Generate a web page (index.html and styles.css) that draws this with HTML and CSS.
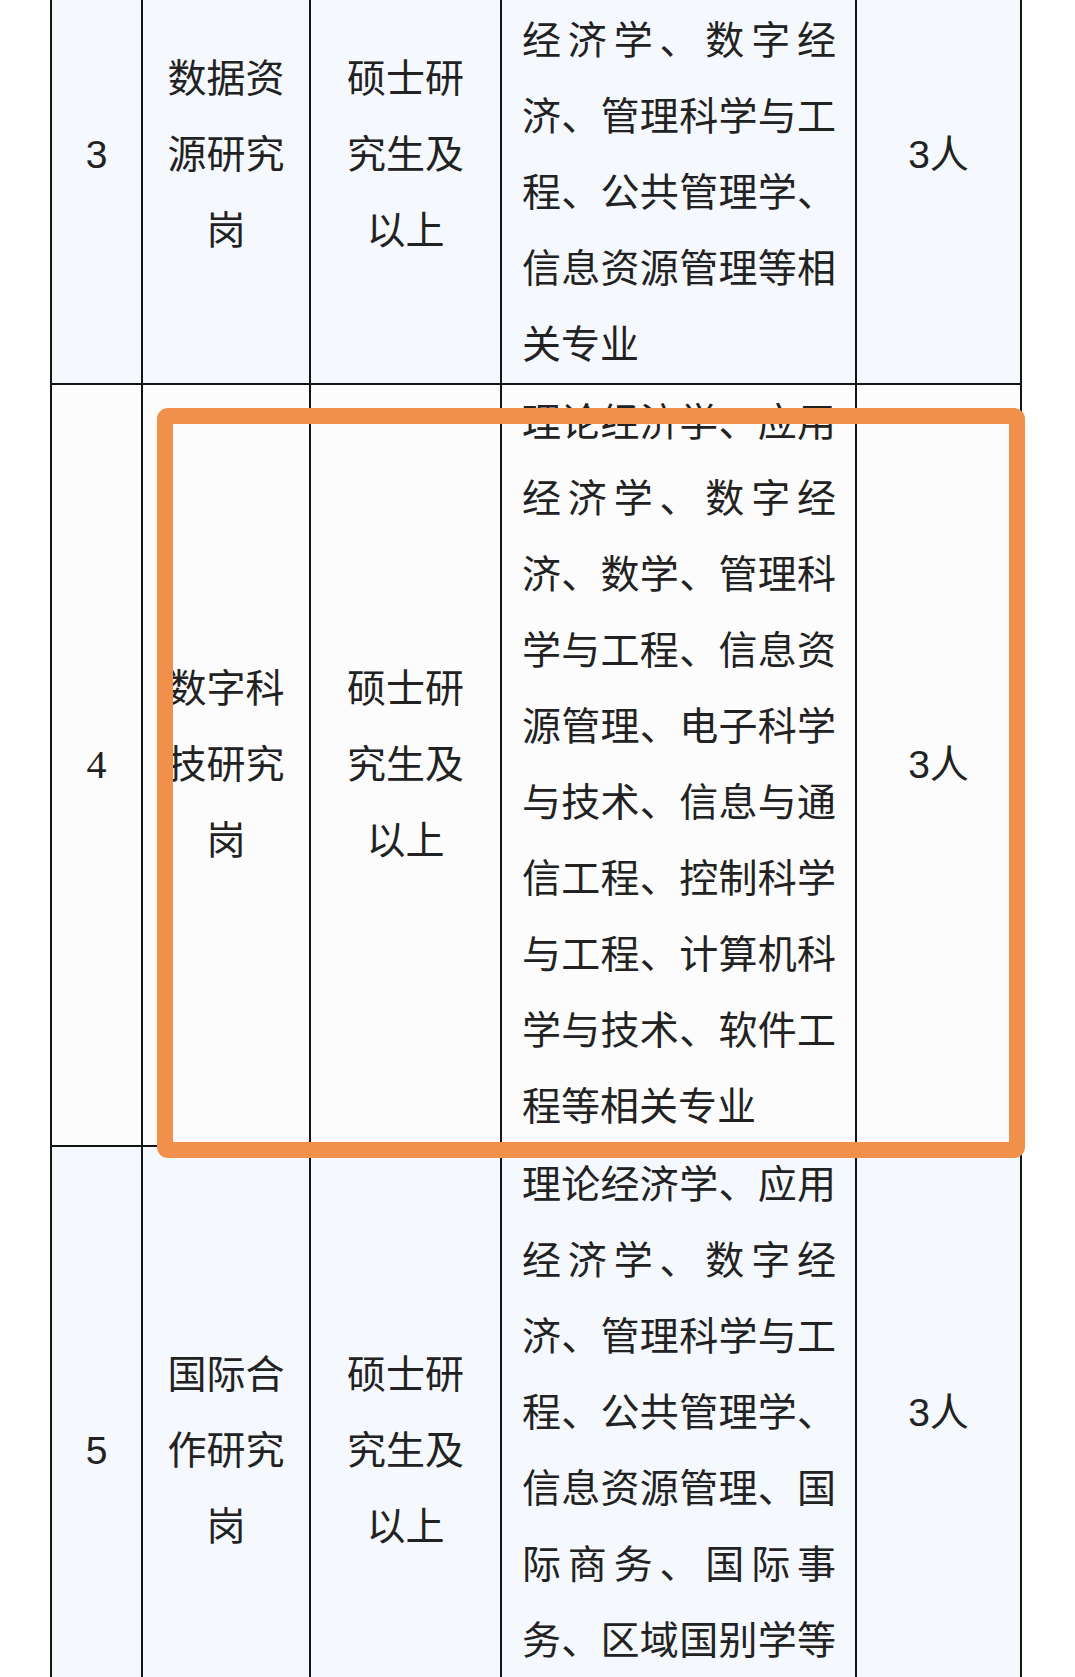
FILE: index.html
```html
<!DOCTYPE html>
<html lang="zh-CN">
<head>
<meta charset="utf-8">
<title>岗位表</title>
<link rel="stylesheet" href="styles.css">
</head>
<body>
<div class="page">
  <table class="jobs">
    <colgroup>
      <col class="c-no">
      <col class="c-post">
      <col class="c-edu">
      <col class="c-major">
      <col class="c-num">
    </colgroup>
    <tbody>
      <tr class="tint">
        <td class="mid">3</td>
        <td class="mid">数据资源研究岗</td>
        <td class="mid">硕士研究生及以上</td>
        <td class="major">理论经济学、应用经济学、数字经济、管理科学与工程、公共管理学、信息资源管理等相关专业</td>
        <td class="mid">3人</td>
      </tr>
      <tr class="plain">
        <td class="mid serif-no">4</td>
        <td class="mid">数字科技研究岗</td>
        <td class="mid">硕士研究生及以上</td>
        <td class="major">理论经济学、应用经济学、数字经济、数学、管理科学与工程、信息资源管理、电子科学与技术、信息与通信工程、控制科学与工程、计算机科学与技术、软件工程等相关专业</td>
        <td class="mid">3人</td>
      </tr>
      <tr class="tint">
        <td class="mid">5</td>
        <td class="mid">国际合作研究岗</td>
        <td class="mid">硕士研究生及以上</td>
        <td class="major">理论经济学、应用经济学、数字经济、管理科学与工程、公共管理学、信息资源管理、国际商务、国际事务、区域国别学等相关专业</td>
        <td class="mid lift">3人</td>
      </tr>
    </tbody>
  </table>
  <div class="highlight"></div>
</div>
</body>
</html>
```

FILE: styles.css
```css
html, body {
  margin: 0;
  padding: 0;
  background: #ffffff;
}

body {
  font-family: "Liberation Sans", "Noto Sans CJK SC", sans-serif;
  color: #222222;
  overflow: hidden;
}

.page {
  position: relative;
  padding-left: 50px;
  margin-top: -75px;
}

.jobs {
  border-collapse: collapse;
  table-layout: fixed;
  width: 972px;
  font-size: 39px;
  line-height: 76px;
}

.c-no { width: 91px; }
.c-post { width: 168px; }
.c-edu { width: 191px; }
.c-major { width: 355px; }
.c-num { width: 165px; }

.jobs td {
  border: 2px solid #151515;
  padding: 0 20px;
  vertical-align: middle;
}

.jobs .tint td { background: #f5f8fd; }
.jobs .plain td { background: #fcfcfc; }

.jobs .mid {
  text-align: center;
}

.jobs .major {
  text-align: justify;
  text-align-last: left;
  padding: 0 19px 0 20px;
}

.jobs .serif-no {
  font-family: "Liberation Serif", serif;
  font-size: 40px;
}

.jobs .lift {
  padding-bottom: 76px;
}

.highlight {
  position: absolute;
  left: 157px;
  top: 483px;
  width: 868px;
  height: 750px;
  box-sizing: border-box;
  border: 16px solid #f0904b;
  border-radius: 11px;
}
```
